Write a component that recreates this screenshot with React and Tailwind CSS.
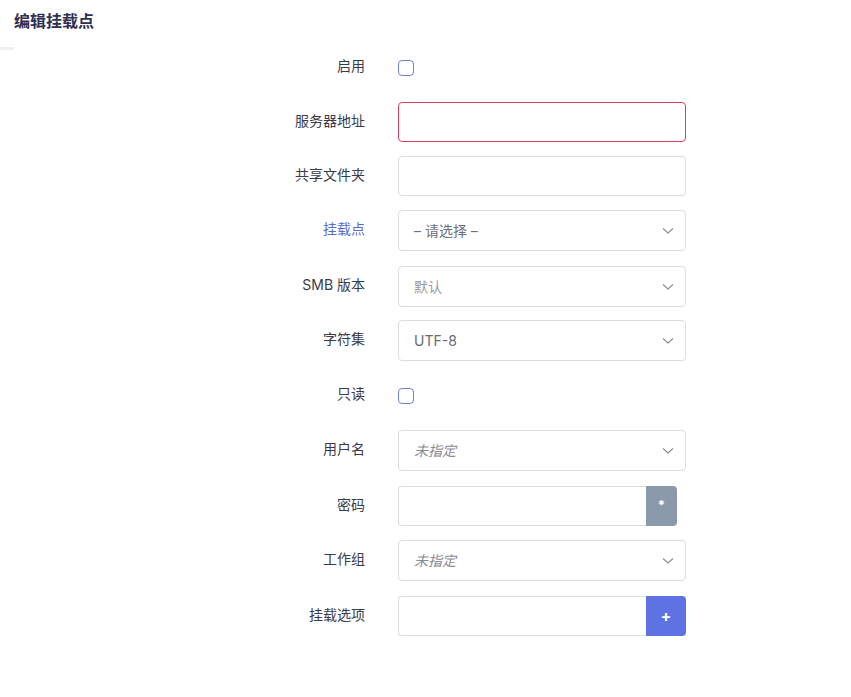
import React from 'react'

// Ligne de formulaire : libellé à droite + contrôle
const Row = ({ label, labelClass = 'text-[#3a3a4a]', tall = true, mt = '', children }) => (
  <div className={`flex items-center ${tall ? 'h-[41px]' : 'h-[40px]'} ${mt}`}>
    <div className={`w-[366px] pr-[1px] pb-[4px] text-right text-[14px] ${labelClass}`}>{label}</div>
    <div className="ml-[32px] flex items-center">{children}</div>
  </div>
)

const Chevron = () => (
  <svg width="12" height="8" viewBox="0 0 12 8" className="absolute right-[11px] top-1/2 -translate-y-1/2">
    <path d="M1 1.5 L6 6 L11 1.5" fill="none" stroke="#8a8a8a" strokeWidth="1.1" />
  </svg>
)

const Select = ({ value, textClass }) => (
  <div className="relative w-[288px] h-[41px] rounded-[4px] border border-[#dcdcdc] bg-white flex items-center pl-[15px]">
    <span className={`text-[14px] ${textClass}`}>{value}</span>
    <Chevron />
  </div>
)

const Input = ({ danger }) => (
  <div
    className={`w-[288px] h-[40px] rounded-[4px] border bg-white ${
      danger ? 'border-[#d7415f]' : 'border-[#dcdcdc]'
    }`}
  />
)

const Checkbox = () => (
  <div className="w-[16px] h-[16px] rounded-[4px] border border-[#6f82d4] bg-white" />
)

export default function App() {
  return (
    <div className="w-[851px] h-[697px] bg-white font-['Inter','Noto_Sans_CJK_SC',sans-serif] relative">
      <h2 className="pl-[14px] pt-[10px] text-[16px] font-bold leading-[22px] text-[#2f2f52]">编辑挂载点</h2>
      <div className="w-[14px] h-[3px] bg-[#f0f0f0] mt-[15px]" />
      <div className="flex flex-col -mt-[3px]">
        <Row label="启用">
          <Checkbox />
        </Row>
        <Row label="服务器地址" tall={false} mt="mt-[14px]">
          <Input danger />
        </Row>
        <Row label="共享文件夹" tall={false} mt="mt-[14px]">
          <Input />
        </Row>
        <Row label="挂载点" labelClass="text-[#5b6cc8]" mt="mt-[14px]">
          <Select value="– 请选择 –" textClass="text-[#6f6f78]" />
        </Row>
        <Row label="SMB 版本" mt="mt-[15px]">
          <Select value="默认" textClass="text-[#9a9aa2]" />
        </Row>
        <Row label="字符集" mt="mt-[13px]">
          <Select value="UTF-8" textClass="text-[#6a6a72]" />
        </Row>
        <Row label="只读" mt="mt-[14px]">
          <Checkbox />
        </Row>
        <Row label="用户名" mt="mt-[14px]">
          <Select value="未指定" textClass="text-[#8a8a90] italic" />
        </Row>
        <Row label="密码" tall={false} mt="mt-[15px]">
          <div className="flex h-[40px]">
            <div className="w-[248px] h-[40px] rounded-l-[4px] border border-r-0 border-[#dcdcdc] bg-white" />
            <div className="w-[31px] h-[40px] rounded-r-[4px] bg-[#8b9aab] flex items-center justify-center text-white text-[13px] font-bold">
              *
            </div>
          </div>
        </Row>
        <Row label="工作组" mt="mt-[14px]">
          <Select value="未指定" textClass="text-[#8a8a90] italic" />
        </Row>
        <Row label="挂载选项" tall={false} mt="mt-[15px]">
          <div className="flex h-[40px]">
            <div className="w-[248px] h-[40px] rounded-l-[4px] border border-r-0 border-[#dcdcdc] bg-white" />
            <div className="w-[40px] h-[40px] rounded-r-[4px] bg-[#5e72e4] flex items-center justify-center text-white text-[16px] font-bold">
              +
            </div>
          </div>
        </Row>
      </div>
    </div>
  )
}
